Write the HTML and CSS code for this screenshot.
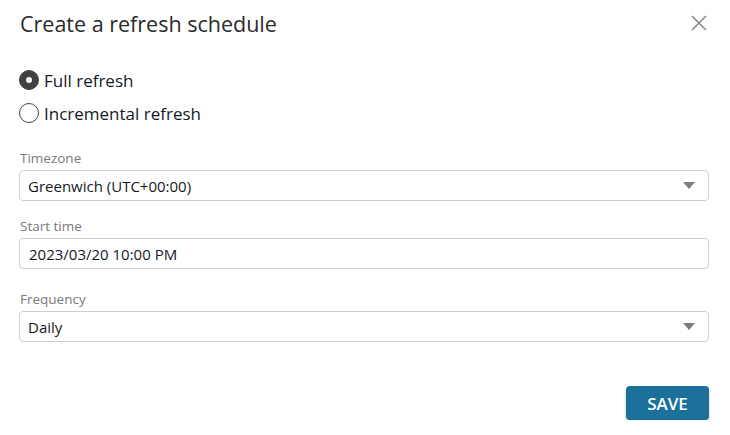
FILE: index.html
```html
<!DOCTYPE html>
<html>
<head>
<meta charset="utf-8">
<link rel="stylesheet" href="styles.css">
</head>
<body>
<div class="dialog">
  <div class="header">
    <h1 class="title">Create a refresh schedule</h1>
    <button class="close" aria-label="Close">
      <svg width="16" height="16" viewBox="0 0 16 16"><path d="M1 1L15 15M15 1L1 15" stroke="#8a8a8a" stroke-width="1.6" fill="none"/></svg>
    </button>
  </div>
  <div class="radios">
    <label class="radio"><span class="dot checked"></span><span class="rlabel">Full refresh</span></label>
    <label class="radio"><span class="dot"></span><span class="rlabel">Incremental refresh</span></label>
  </div>
  <div class="field f1">
    <div class="flabel">Timezone</div>
    <div class="control select"><span>Greenwich (UTC+00:00)</span><span class="caret"></span></div>
  </div>
  <div class="field f2">
    <div class="flabel">Start time</div>
    <div class="control input"><span>2023/03/20 10:00 PM</span></div>
  </div>
  <div class="field f3">
    <div class="flabel">Frequency</div>
    <div class="control select"><span>Daily</span><span class="caret"></span></div>
  </div>
  <div class="footer">
    <button class="save">SAVE</button>
  </div>
</div>
</body>
</html>
```
FILE: styles.css
```css
html, body { margin: 0; padding: 0; background: #fff; }
body { font-family: "Open Sans", Lato, sans-serif; color: #16191f; }
.dialog { width: 690px; padding: 0 21px 0 19px; }
.header { display: flex; justify-content: space-between; align-items: center; height: 46px; }
.title { margin: 0 0 0 1px; font-size: 21.5px; font-weight: 400; color: #2b2b2b; }
.close { border: 0; background: none; padding: 0; margin-right: 2px; width: 16px; height: 16px; display: flex; }
.radios { margin-top: 24px; display: flex; flex-direction: column; gap: 13px; }
.radio { display: flex; align-items: center; height: 20px; font-size: 17px; color: #16191f; }
.dot { width: 18px; height: 18px; border: 1px solid #444; border-radius: 50%; box-sizing: content-box; margin-right: 5px; position: relative; }
.dot.checked { background: #414141; border-color: #414141; }
.dot.checked::after { content: ""; position: absolute; left: 6px; top: 6px; width: 6px; height: 6px; background: #fff; border-radius: 50%; }
.f1 { margin-top: 26px; }
.f2 { margin-top: 16px; }
.f3 { margin-top: 21px; }
.flabel { font-size: 13.5px; color: #7a7a7a; padding-left: 1px; line-height: 18px; margin-bottom: 3px; }
.control { height: 29px; border: 1px solid #cfcfcf; border-radius: 4px; display: flex; align-items: center; justify-content: space-between; padding: 0 13px 0 8px; font-size: 15px; color: #16191f; }
.input { padding-left: 9px; }
.caret { width: 0; height: 0; border-left: 6px solid transparent; border-right: 6px solid transparent; border-top: 7px solid #7d7d7d; }
.footer { display: flex; justify-content: flex-end; margin-top: 44px; }
.save { width: 83px; height: 34px; background: #1b7199; color: #fff; border: 0; border-radius: 4px; font-family: "Open Sans", Lato, sans-serif; font-size: 17px; font-weight: 600; box-shadow: 0 2px 3px rgba(0,0,0,0.25); }
```
